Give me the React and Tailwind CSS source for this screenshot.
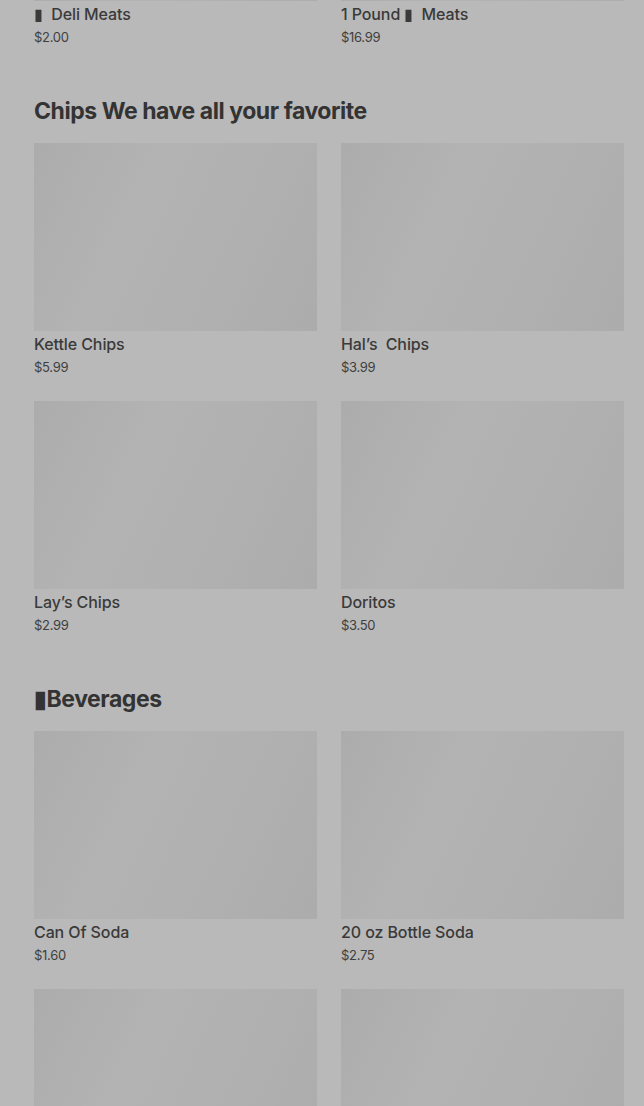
const SECTIONS = [
    {
        title: 'Chips We have all your favorite',
        items: [
            { name: 'Kettle Chips', price: '$5.99' },
            { name: 'Hal’s  Chips', price: '$3.99' },
            { name: 'Lay’s Chips', price: '$2.99' },
            { name: 'Doritos', price: '$3.50' },
        ],
    },
    {
        title: '▮Beverages',
        items: [
            { name: 'Can Of Soda', price: '$1.60' },
            { name: '20 oz Bottle Soda', price: '$2.75' },
            { name: '', price: '' },
            { name: '', price: '' },
        ],
    },
]

const TOP = [
    { name: '▮  Deli Meats', price: '$2.00' },
    { name: '1 Pound ▮  Meats', price: '$16.99' },
]

const shimmer = 'bg-[linear-gradient(115deg,#acacac_0%,#b3b3b3_35%,#b1b1b1_60%,#acacac_100%)]'

function Item({ item, imageClass = 'h-[188px]' }) {
    return (
        <div>
            <div className={`${imageClass} ${shimmer}`} />
            <p className="mt-[3px] text-[16px] leading-[20px] font-medium text-[#3a3a3a] whitespace-pre font-['Inter',sans-serif] tracking-[-0.1px]">{item.name}</p>
            <p className="mt-[4px] text-[13px] leading-[18px] text-[#3f3f3f] font-['Inter',sans-serif] tracking-[-0.3px]">{item.price}</p>
        </div>
    )
}

export default function App() {
    return (
        <div className="min-h-screen bg-[#b9b9b9] pl-[34px] pr-[20px] overflow-hidden h-[1106px]">
            <div className="grid grid-cols-2 gap-x-6">
                {TOP.map(t => <Item key={t.name} item={t} imageClass="h-[1px]" />)}
            </div>

            {SECTIONS.map(s => (
                <section key={s.title} className="mt-[49px]">
                    <h2 className="text-[23px] leading-[32px] font-bold tracking-[-0.45px] text-[#333333] font-['Inter',sans-serif]">{s.title}</h2>
                    <div className="mt-[16px] grid grid-cols-2 gap-x-6 gap-y-[25px]">
                        {s.items.map((it, i) => <Item key={i} item={it} />)}
                    </div>
                </section>
            ))}
        </div>
    )
}
